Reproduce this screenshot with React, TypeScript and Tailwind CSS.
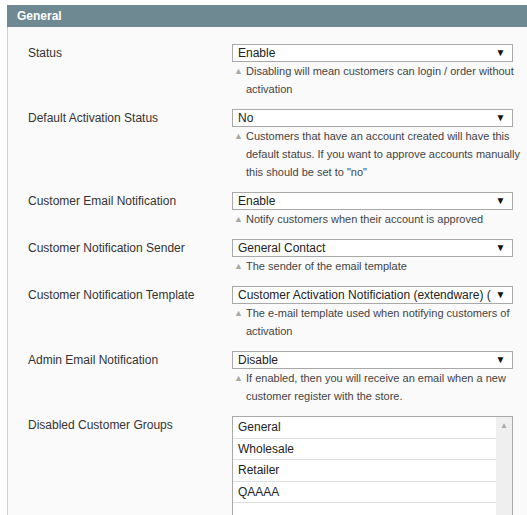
import React from 'react'

type Row = {
  label: string
  value: string
  hint?: string[]
}

const rows: Row[] = [
  { label: 'Status', value: 'Enable', hint: ['Disabling will mean customers can login / order without', 'activation'] },
  {
    label: 'Default Activation Status',
    value: 'No',
    hint: [
      'Customers that have an account created will have this',
      'default status. If you want to approve accounts manually',
      'this should be set to "no"',
    ],
  },
  { label: 'Customer Email Notification', value: 'Enable', hint: ['Notify customers when their account is approved'] },
  { label: 'Customer Notification Sender', value: 'General Contact', hint: ['The sender of the email template'] },
  {
    label: 'Customer Notification Template',
    value: 'Customer Activation Notificiation (extendware) (',
    hint: ['The e-mail template used when notifying customers of', 'activation'],
  },
  {
    label: 'Admin Email Notification',
    value: 'Disable',
    hint: ['If enabled, then you will receive an email when a new', 'customer register with the store.'],
  },
]

const groups = ['General', 'Wholesale', 'Retailer', 'QAAAA', '']

function Select({ value }: { value: string }) {
  return (
    <div className="flex h-[18px] items-center border border-[#a9a9a9] bg-white text-[12px] leading-[16px] text-[#222]">
      <span className="flex-1 overflow-hidden whitespace-nowrap pl-[5px]">{value}</span>
      <span className="w-[18px] shrink-0 pr-[5px] text-center text-[10px] leading-[16px] text-[#111]">▼</span>
    </div>
  )
}

function Hint({ lines }: { lines: string[] }) {
  return (
    <div className="flex text-[11px] leading-[18px] text-[#444]">
      <span className="w-[14px] shrink-0 pl-[2px] text-[9px] text-[#a8a8a8]">▲</span>
      <div>
        {lines.map((l, i) => (
          <div key={i} className="whitespace-nowrap">{l}</div>
        ))}
      </div>
    </div>
  )
}

export default function App() {
  return (
    <div className="h-[515px] w-[527px] overflow-hidden bg-white pl-[7px] pt-[5px] font-['Liberation_Sans',Arial,sans-serif]">
      {/* Section header */}
      <div className="flex h-[22px] items-center bg-[#6f8992] pl-[10px] text-[12px] font-bold text-white">General</div>

      {/* Fieldset */}
      <div className="h-full border-l border-[#cfcfcf] bg-[#fafafa] pl-[20px] pt-[17px]">
        {rows.map((r) => (
          <div key={r.label} className="mb-[11px] flex">
            <div className="w-[204px] shrink-0 text-[12px] leading-[18px] text-[#333]">{r.label}</div>
            <div className="w-[281px] shrink-0">
              <Select value={r.value} />
              {r.hint && <Hint lines={r.hint} />}
            </div>
          </div>
        ))}

        {/* Multiselect */}
        <div className="flex">
          <div className="w-[204px] shrink-0 text-[12px] leading-[18px] text-[#333]">Disabled Customer Groups</div>
          <div className="flex h-[120px] w-[281px] shrink-0 border border-[#a9a9a9] bg-white">
            <div className="flex-1">
              {groups.map((g, i) => (
                <div key={i} className="flex h-[21.5px] items-center border-b border-[#ddd] pl-[5px] text-[12px] text-[#222]">
                  {g}
                </div>
              ))}
            </div>
            <div className="w-[16px] bg-[#efefef] pt-[4px] text-center text-[8px] leading-[10px] text-[#a8a8a8]">▲</div>
          </div>
        </div>
      </div>
    </div>
  )
}
